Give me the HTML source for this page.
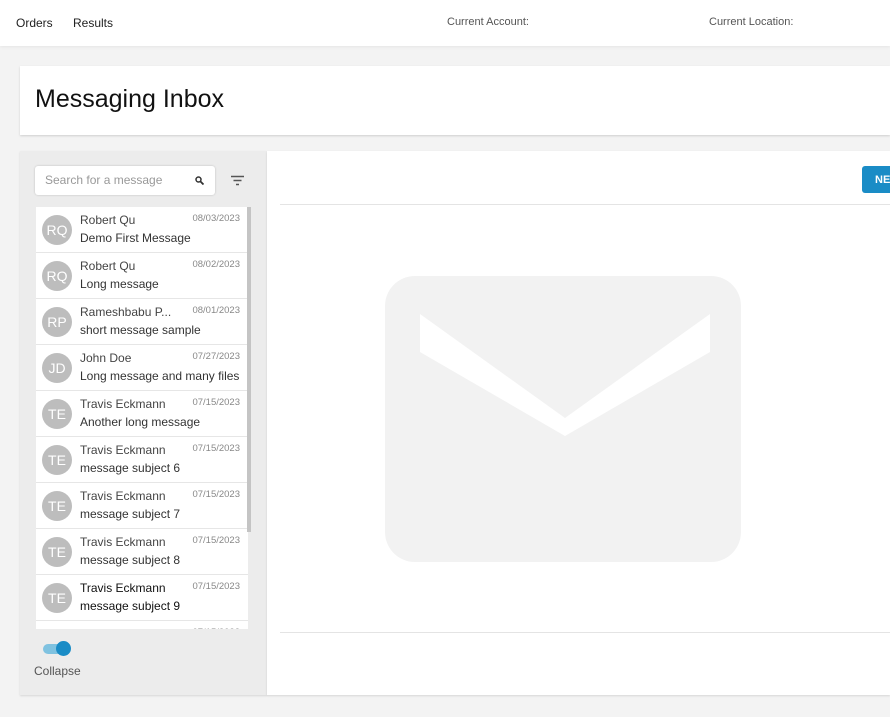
<!DOCTYPE html>
<html><head><style>
*{margin:0;padding:0;box-sizing:border-box}
body{width:890px;height:717px;background:#f3f3f3;font-family:"Liberation Sans",sans-serif;position:relative;overflow:hidden;color:#222}
.abs{position:absolute}
.top{left:0;top:0;width:890px;height:46px;background:#fff;box-shadow:0 1px 3px rgba(0,0,0,.06)}
.top span{position:absolute;top:16px;font-size:12px}
.hdr{left:20px;top:66px;width:870px;height:69px;background:#fff;box-shadow:0 1px 2px rgba(0,0,0,.15)}
.hdr h1{position:absolute;left:15px;top:19px;font-size:25px;font-weight:normal;color:#111}
.left{left:20px;top:151px;width:247px;height:544px;background:#ececec;box-shadow:0 1px 2px rgba(0,0,0,.12)}
.right{left:267px;top:151px;width:623px;height:544px;background:#fff;box-shadow:0 1px 2px rgba(0,0,0,.12)}
.search{left:35px;top:166px;width:180px;height:29px;background:#fff;border-radius:3px;box-shadow:0 0 2px rgba(0,0,0,.2);font-size:12px;color:#999;padding:7px 10px}
.list{left:36px;top:207px;width:212px;height:422px;overflow:hidden;background:#e6e6e6}
.row{position:relative;height:45px;background:#fff;margin-bottom:1px}
.av{position:absolute;left:6px;top:8px;width:30px;height:30px;border-radius:50%;background:#bdbdbd;color:#fff;font-size:14px;text-align:center;line-height:30px}
.nm{position:absolute;left:44px;top:6px;font-size:12px;color:#444}
.sb{position:absolute;left:44px;top:24px;font-size:12px;color:#333}
.dt{position:absolute;right:8px;top:6px;font-size:9.5px;color:#888}
.bold .nm,.bold .sb{color:#111}
</style></head><body>
<div class="abs top"><span style="left:16px">Orders</span><span style="left:73px">Results</span><span style="left:447px;color:#555;font-size:11px">Current Account:</span><span style="left:709px;color:#555;font-size:11px">Current Location:</span></div>
<div class="abs hdr"><h1>Messaging Inbox</h1></div>
<div class="abs left"></div>
<div class="abs right"></div>
<div class="abs search">Search for a message<svg class="abs" style="left:160px;top:10px" width="9" height="9" viewBox="0 0 9 9"><circle cx="3.5" cy="3.5" r="2.5" fill="none" stroke="#333" stroke-width="1.5"/><path d="M5.5 5.5L8.5 8.5" stroke="#333" stroke-width="1.8"/></svg></div>
<svg class="abs" style="left:231px;top:175px" width="13" height="11"><path d="M0 1.5H13M2.5 5.5H10.5M5 9.5H8" stroke="#555" stroke-width="1.4"/></svg>
<div class="abs list">
<div class="row"><div class="av">RQ</div><div class="nm">Robert Qu</div><div class="sb">Demo First Message</div><div class="dt">08/03/2023</div></div>
<div class="row"><div class="av">RQ</div><div class="nm">Robert Qu</div><div class="sb">Long message</div><div class="dt">08/02/2023</div></div>
<div class="row"><div class="av">RP</div><div class="nm">Rameshbabu P...</div><div class="sb">short message sample</div><div class="dt">08/01/2023</div></div>
<div class="row"><div class="av">JD</div><div class="nm">John Doe</div><div class="sb">Long message and many files</div><div class="dt">07/27/2023</div></div>
<div class="row"><div class="av">TE</div><div class="nm">Travis Eckmann</div><div class="sb">Another long message</div><div class="dt">07/15/2023</div></div>
<div class="row"><div class="av">TE</div><div class="nm">Travis Eckmann</div><div class="sb">message subject 6</div><div class="dt">07/15/2023</div></div>
<div class="row"><div class="av">TE</div><div class="nm">Travis Eckmann</div><div class="sb">message subject 7</div><div class="dt">07/15/2023</div></div>
<div class="row"><div class="av">TE</div><div class="nm">Travis Eckmann</div><div class="sb">message subject 8</div><div class="dt">07/15/2023</div></div>
<div class="row bold"><div class="av">TE</div><div class="nm">Travis Eckmann</div><div class="sb">message subject 9</div><div class="dt">07/15/2023</div></div>
<div class="row"><div class="av">TE</div><div class="nm">Travis Eckmann</div><div class="sb"></div><div class="dt">07/15/2023</div></div>
</div>
<div class="abs" style="left:247px;top:207px;width:4px;height:325px;background:#c4c4c4"></div>
<div class="abs" style="left:43px;top:644px;width:25px;height:10px;border-radius:5px;background:#7fc2e0"></div>
<div class="abs" style="left:56px;top:641px;width:15px;height:15px;border-radius:50%;background:#1a8cc6"></div>
<div class="abs" style="left:34px;top:664px;font-size:12px;color:#555">Collapse</div>
<div class="abs" style="left:862px;top:166px;width:40px;height:27px;background:#1a8cc6;border-radius:3px;color:#fff;font-size:11px;font-weight:bold;padding:8px 0 0 13px">NEW</div>
<div class="abs" style="left:280px;top:204px;width:610px;height:1px;background:#e4e4e4"></div>
<div class="abs" style="left:280px;top:632px;width:610px;height:1px;background:#e4e4e4"></div>
<svg class="abs" style="left:385px;top:276px" width="356" height="286"><rect width="356" height="286" rx="30" fill="#f2f2f2"/><path d="M35 38L180 142L325 38V76L180 160L35 76Z" fill="#fff"/></svg>
</body></html>
